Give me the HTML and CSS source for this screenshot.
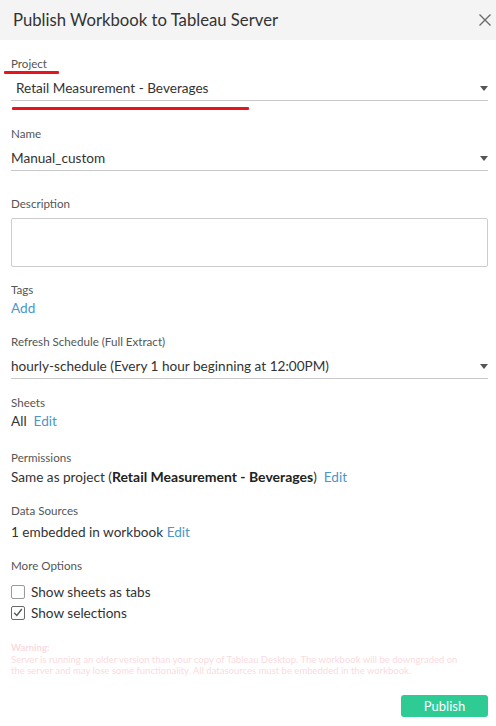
FILE: index.html
```html
<!DOCTYPE html>
<html lang="en">
<head>
<meta charset="utf-8">
<title>Publish Workbook to Tableau Server</title>
<link rel="stylesheet" href="styles.css">
</head>
<body>
<div class="dialog">
  <header class="dialog-header">
    <h1 class="dialog-title">Publish Workbook to Tableau Server</h1>
    <button class="close-btn" aria-label="Close">
      <svg width="12" height="12" viewBox="0 0 12 12"><path d="M0.5 0.5 L11.5 11.5 M11.5 0.5 L0.5 11.5" stroke="#6b6b6b" stroke-width="1.4" fill="none"/></svg>
    </button>
  </header>

  <div class="dialog-body">
    <div class="field field-project">
      <div class="label">Project<span class="mark mark-label"></span></div>
      <div class="select select-indented">
        <span class="select-value">Retail Measurement - Beverages</span>
        <span class="caret"></span>
      </div>
      <span class="mark mark-value"></span>
    </div>

    <div class="field field-name">
      <div class="label">Name</div>
      <div class="select">
        <span class="select-value">Manual_custom</span>
        <span class="caret"></span>
      </div>
    </div>

    <div class="field field-desc">
      <div class="label">Description</div>
      <div class="textarea"></div>
    </div>

    <div class="field field-tags">
      <div class="label">Tags</div>
      <div class="value"><a class="link">Add</a></div>
    </div>

    <div class="field field-refresh">
      <div class="label">Refresh Schedule (Full Extract)</div>
      <div class="select">
        <span class="select-value">hourly-schedule (Every 1 hour beginning at 12:00PM)</span>
        <span class="caret"></span>
      </div>
    </div>

    <div class="field field-sheets">
      <div class="label">Sheets</div>
      <div class="value">All&nbsp; <a class="link">Edit</a></div>
    </div>

    <div class="field field-perms">
      <div class="label">Permissions</div>
      <div class="value">Same as project (<b>Retail Measurement - Beverages</b>)&nbsp; <a class="link">Edit</a></div>
    </div>

    <div class="field field-sources">
      <div class="label">Data Sources</div>
      <div class="value">1 embedded in workbook <a class="link">Edit</a></div>
    </div>

    <div class="field field-options">
      <div class="label">More Options</div>
      <label class="check-row first"><span class="checkbox"></span>Show sheets as tabs</label>
      <label class="check-row"><span class="checkbox checked"><svg width="10" height="9" viewBox="0 0 10 9"><path d="M1.2 4.8 L3.8 7.4 L8.8 1" stroke="#555" stroke-width="1.4" fill="none"/></svg></span>Show selections</label>
    </div>

    <div class="warning">
      <div class="warning-title">Warning:</div>
      <div>Server is running an older version than your copy of Tableau Desktop. The workbook will be downgraded on the server and may lose some functionality. All datasources must be embedded in the workbook.</div>
    </div>

    <div class="footer">
      <button class="publish-btn">Publish</button>
    </div>
  </div>
</div>
</body>
</html>
```

FILE: styles.css
```css
* { box-sizing: border-box; }

html, body {
  margin: 0;
  padding: 0;
  background: #ffffff;
}

body {
  font-family: Lato, "Liberation Sans", Arial, sans-serif;
  color: #333333;
  width: 496px;
  height: 726px;
  overflow: hidden;
}

.dialog {
  width: 496px;
  height: 726px;
  display: flex;
  flex-direction: column;
}

.dialog-header {
  height: 40px;
  background: #f4f4f4;
  display: flex;
  align-items: center;
  justify-content: space-between;
  padding: 0 4px 0 13px;
}

.dialog-title {
  margin: 0;
  font-size: 16.7px;
  font-weight: normal;
  color: #333333;
}

.close-btn {
  border: 0;
  background: transparent;
  padding: 0;
  width: 14px;
  height: 20px;
  display: flex;
  align-items: center;
  justify-content: center;
}

.dialog-body {
  padding: 0 8px 0 11px;
  display: flex;
  flex-direction: column;
  flex: 1;
}

.field {
  position: relative;
}

.label {
  position: relative;
  font-size: 11.6px;
  line-height: 14px;
  color: #555555;
}

.value {
  font-size: 13.6px;
  line-height: 18px;
  color: #333333;
  margin-top: 2px;
}

.value b {
  font-size: 14px;
  font-weight: bold;
  color: #222222;
}

.link {
  color: #4b97c9;
  cursor: pointer;
}

.select {
  margin-top: 5px;
  height: 25px;
  border-bottom: 1px solid #c8c8c8;
  display: flex;
  align-items: center;
  justify-content: space-between;
  font-size: 13.6px;
  color: #333333;
  padding-right: 0;
}

.select-indented .select-value {
  padding-left: 5px;
}

.caret {
  width: 0;
  height: 0;
  border-left: 4px solid transparent;
  border-right: 4px solid transparent;
  border-top: 5px solid #555555;
}

.textarea {
  margin-top: 7px;
  height: 49px;
  border: 1px solid #cccccc;
  border-radius: 2px;
}

/* red annotation strokes */
.mark {
  position: absolute;
  height: 3px;
  background: #e8141c;
  border-radius: 1px;
}
.mark-label {
  left: -7px;
  width: 55px;
  top: 14px;
}
.mark-value {
  left: 1px;
  width: 237px;
  top: 50px;
}

.field-project { margin-top: 17px; }
.field-name { margin-top: 26px; }
.field-desc { margin-top: 26px; }
.field-tags { margin-top: 16px; }
.field-refresh { margin-top: 18px; }
.field-sheets { margin-top: 17px; }
.field-perms { margin-top: 21px; }
.field-perms .value { margin-top: 3px; }
.field-sources { margin-top: 18px; }
.field-sources .value { margin-top: 5px; }
.field-options { margin-top: 18px; }

.check-row {
  display: flex;
  align-items: center;
  gap: 6px;
  height: 21px;
  font-size: 13.6px;
  color: #333333;
}
.check-row.first { margin-top: 8px; }

.checkbox {
  width: 14px;
  height: 14px;
  border: 1px solid #9a9a9a;
  border-radius: 2px;
  background: #fff;
  display: flex;
  align-items: center;
  justify-content: center;
}
.checkbox.checked { border-color: #6a6a6a; }

.warning {
  margin-top: 19px;
  font-size: 9.5px;
  line-height: 11.5px;
  color: #fadbe0;
  padding-right: 20px;
}
.warning-title { font-weight: bold; }

.footer {
  margin-top: auto;
  margin-bottom: 9px;
  display: flex;
  justify-content: flex-end;
}

.publish-btn {
  width: 87px;
  height: 22px;
  border: 0;
  border-radius: 3px;
  background: #2ecc94;
  color: #ffffff;
  font-family: inherit;
  font-size: 13px;
  padding: 0;
}
```
